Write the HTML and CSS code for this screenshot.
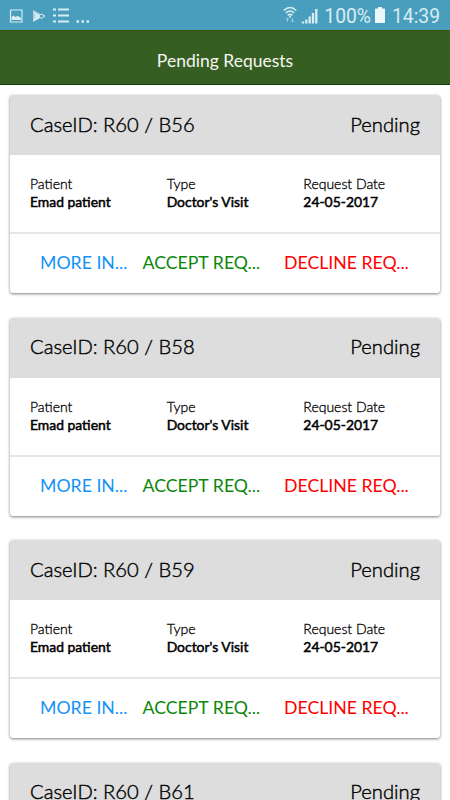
FILE: index.html
```html
<!DOCTYPE html>
<html lang="en"><head><meta charset="utf-8"><title>Pending Requests</title><link rel="stylesheet" href="styles.css"></head>
<body>
<div class="status">
<div class="left">
<svg width="14" height="14" viewBox="0 0 14 14"><path d="M1.500 1h11.500v12H1.500z" fill="none" stroke="currentColor" stroke-width="1.2"/><path d="M2.500 11V8l2-1.500 2 1.500 2-1 1.500.500 2 1.500v2z" fill="currentColor"/></svg>
<svg class="play" width="14" height="14" viewBox="0 0 14 14"><path d="M1 1l7.500 4.300L4.500 9z" fill="currentColor" opacity=".8"/><path d="M1 13l7.500-4.300L4.500 5z" fill="currentColor"/><path d="M1 1v12l5-6z" fill="currentColor" opacity=".7"/><path d="M9 5l4 2-4 2.500-2-2.500z" fill="none" stroke="currentColor"/></svg>
<svg class="menu" width="16" height="15" viewBox="0 0 16 15"><path d="M0 1.500h3M5 1.500h11M0 7.500h3M5 7.500h11M0 13.500h3M5 13.500h11" stroke="currentColor" stroke-width="2.2"/></svg>
<svg class="dots" width="14" height="15" viewBox="0 0 14 15"><path d="M.5 13.500h2.500M5.500 13.500h2.500M10.500 13.500h2.500" stroke="currentColor" stroke-width="2.300"/></svg>
</div>
<div class="right">
<svg class="wifi" width="14" height="17" viewBox="0 0 14 17"><path d="M.7 4.500q6.300-6 12.600 0M2.700 7q4.300-4 8.600 0M4.700 9.300q2.300-2 4.600 0" fill="none" stroke="currentColor" stroke-width="1.600"/><circle cx="7" cy="10.700" r="1" fill="currentColor"/><path d="M4.500 16v-4M3 13.500L4.500 12 6 13.500M9.500 12v4M8 14.500L9.500 16l1.500-1.500" fill="none" stroke="currentColor" opacity=".55"/></svg>
<svg class="signal" width="17" height="16" viewBox="0 0 17 16"><path d="M2 15.500v-2M5.300 15.500v-4M8.700 15.500V8.500M12 15.500v-10.500M15.300 15.500V1" stroke="currentColor" stroke-width="2.300"/></svg>
<span class="percent">100%</span>
<svg class="battery" width="10" height="16" viewBox="0 0 10 16"><path d="M3 0h4v1.500h2.500q.5 0 .5.500v13.500q0 .5-.5.500h-9q-.5 0-.5-.5V2q0-.5.5-.5H3z" fill="currentColor"/></svg>
<span class="clock">14:39</span>
</div>
</div>
<header>Pending Requests</header>
<main id="list"></main>
<script src="app.js"></script>
</body></html>
```
FILE: styles.css
```css
*{box-sizing:border-box}
body{margin:0;height:800px;overflow:hidden;background:#fff;font-family:Lato,sans-serif;color:#000}
svg{display:block;flex:none}
.status{height:30px;background:#4a9ebd;color:#d8edf3;display:flex;justify-content:space-between;align-items:center;padding:1px 10px 0 9px;font:19.300px/30px Roboto,sans-serif}
.left,.right{display:flex;align-items:center}
.play{margin-left:9px}.menu{margin-left:7px}.dots{margin-left:7px}
.wifi{margin-bottom:2px}.signal{margin-left:4px}.percent{margin-left:6px}.battery{margin:0 7px 2px 4px;color:#eaf7fb}
.percent,.clock{white-space:nowrap;padding-top:2px}
header{height:55px;background:#375e22;border-top:1px solid #385600;border-bottom:1px solid #12420d;color:#f4f7f2;text-align:center;font-size:17.500px;line-height:59px}
main{height:715px;overflow:hidden;padding:10px 10px 0}
.card{height:198px;margin-bottom:24.500px;border-radius:3px;overflow:hidden;box-shadow:0 1px 3px rgba(0,0,0,.5)}
.title{height:60px;background:#ddd;display:flex;justify-content:space-between;align-items:center;padding:0 20px 2.500px;font-size:20.200px;font-weight:300;-webkit-text-stroke:.4px #000}
.info{height:79px;display:grid;grid-template-columns:1fr 1fr 1fr;padding:20px 0 0 20px;border-bottom:2px solid #e6e6e6;font-size:14px;line-height:18px;font-weight:300;-webkit-text-stroke:.3px #000}
.info b{display:block;font-size:13.900px;font-weight:400;-webkit-text-stroke:.5px #000}
.actions{height:59px;display:flex;align-items:center;font-size:17.700px;padding:0 0 2px 30px}
.actions span{white-space:nowrap}
.more{color:#1592f5;width:102.500px}.accept{color:#0b870b;width:141.500px}.decline{color:#f00}
```
FILE: app.js
```js
const details = `<div class="info"><div>Patient<b>Emad patient</b></div><div>Type<b>Doctor's Visit</b></div><div>Request Date<b>24-05-2017</b></div></div><div class="actions"><span class="more">MORE IN...</span><span class="accept">ACCEPT REQ...</span><span class="decline">DECLINE REQ...</span></div>`;
document.getElementById('list').innerHTML = ['B56','B58','B59','B61'].map((id, i) => `<section class="card"><div class="title"><span>CaseID: R60 / ${id}</span><span>Pending</span></div>${i < 3 ? details : ''}</section>`).join('');
```
